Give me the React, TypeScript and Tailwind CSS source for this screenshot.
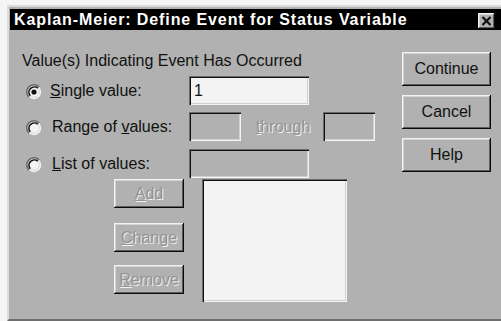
import React from 'react';

const raised =
    'shadow-[inset_-1px_-1px_0_#0a0a0a,inset_1px_1px_0_#f2f2f2,inset_-2px_-2px_0_#5c5c5c,inset_2px_2px_0_#d4d4d4]';
const sunken =
    'shadow-[inset_1px_1px_0_#6a6a6a,inset_2px_2px_0_#111,inset_-1px_-1px_0_#f4f4f4,inset_-2px_-2px_0_#d0d0d0]';
const dimText = 'text-[#939393] [text-shadow:1px_1px_0_#f2f2f2]';

// win95 style radio, drawn a bit larger than the real thing
const Radio: React.FC<{ checked?: boolean }> = ({ checked }) => (
    <svg width="16" height="16" viewBox="0 0 16 16" className="block">
        <circle cx="8" cy="8" r="7.2" fill="#f4f4f4" />
        <circle cx="8" cy="8" r="5.4" fill="#f2f3f2" stroke="#d8d8d8" strokeWidth="1" />
        <path d="M2.9 13.1 A7.2 7.2 0 0 1 13.1 2.9" fill="none" stroke="#6a6a6a" strokeWidth="1.6" />
        <path d="M4.2 11.8 A5.4 5.4 0 0 1 11.8 4.2" fill="none" stroke="#111" strokeWidth="1.6" />
        {checked && <circle cx="8" cy="8" r="2.6" fill="#111" />}
    </svg>
);

const Btn: React.FC<{ children: React.ReactNode; disabled?: boolean; className?: string }> = ({
    children,
    disabled,
    className,
}) => (
    <div
        className={`flex items-center justify-center bg-[#b0b1b0] ${raised} ${disabled ? dimText : 'text-[#111]'} ${className ?? ''}`}
    >
        {children}
    </div>
);

export default function App() {
    return (
        <div className="w-[501px] h-[321px] overflow-hidden bg-[#f5f5f5] pt-[5px] pl-[7px] font-['Liberation_Sans',Arial,sans-serif] text-[16px] leading-[18px] text-[#111]">
            <div className="h-[316px] flex flex-col bg-[#b0b1b0] border-t-2 border-l-2 border-[#dcdcdc] border-b-2 border-b-[#6e6e6e] pt-[2px] pl-[1px]">
                {/* title bar */}
                <div className="h-[21px] shrink-0 bg-black flex items-center justify-between pl-[4px] pr-[6px]">
                    <span className="text-white font-bold tracking-[0.9px]">
                        Kaplan-Meier: Define Event for Status Variable
                    </span>
                    <div className={`w-[17px] h-[16px] mt-[2px] bg-[#b0b1b0] flex items-center justify-center ${raised}`}>
                        <svg width="11" height="10" viewBox="0 0 11 10">
                            <path d="M1.5 1 L9.5 9 M9.5 1 L1.5 9" stroke="#111" strokeWidth="2.2" />
                        </svg>
                    </div>
                </div>

                <div className="flex flex-1">
                    {/* left side */}
                    <div className="flex flex-col pl-[12px] pt-[22px]">
                        <div>Value(s) Indicating Event Has Occurred</div>

                        <div className="flex items-center h-[29px] mt-[6px]">
                            <div className="w-[28px] pl-[4px] pt-[2px]">
                                <Radio checked />
                            </div>
                            <div className="w-[139px]">
                                <span className="underline">S</span>ingle value:
                            </div>
                            <div className={`w-[120px] h-[29px] bg-[#f2f3f2] pl-[5px] flex items-center ${sunken}`}>1</div>
                        </div>

                        <div className="flex items-center h-[29px] mt-[7px]">
                            <div className="w-[28px] pl-[4px] pt-[2px]">
                                <Radio />
                            </div>
                            <div className="w-[139px] pl-[2px]">
                                Range of <span className="underline">v</span>alues:
                            </div>
                            <div className={`w-[52px] h-[29px] ${sunken}`} />
                            <div className={`ml-[15px] w-[67px] ${dimText}`}>
                                <span className="underline">t</span>hrough
                            </div>
                            <div className={`w-[52px] h-[29px] ${sunken}`} />
                        </div>

                        <div className="flex items-center h-[29px] mt-[8px]">
                            <div className="w-[28px] pl-[4px] pt-[2px]">
                                <Radio />
                            </div>
                            <div className="w-[139px] pl-[2px]">
                                <span className="underline">L</span>ist of values:
                            </div>
                            <div className={`w-[120px] h-[29px] ${sunken}`} />
                        </div>

                        <div className="flex mt-[1px] ml-[92px]">
                            <div className="flex flex-col w-[70px]">
                                <Btn disabled className="h-[29px]">
                                    <span className="underline">A</span>dd
                                </Btn>
                                <Btn disabled className="h-[29px] mt-[15px]">
                                    <span className="underline">C</span>hange
                                </Btn>
                                <Btn disabled className="h-[29px] mt-[13px]">
                                    <span className="underline">R</span>emove
                                </Btn>
                            </div>
                            <div className={`ml-[18px] w-[145px] h-[123px] bg-[#f2f3f2] ${sunken}`} />
                        </div>
                    </div>

                    {/* right buttons */}
                    <div className="ml-auto pr-[10px] pt-[22px] flex flex-col w-[99px]">
                        <Btn className="h-[34px]">Continue</Btn>
                        <Btn className="h-[34px] mt-[9px]">Cancel</Btn>
                        <Btn className="h-[34px] mt-[9px]">Help</Btn>
                    </div>
                </div>
            </div>
        </div>
    );
}
